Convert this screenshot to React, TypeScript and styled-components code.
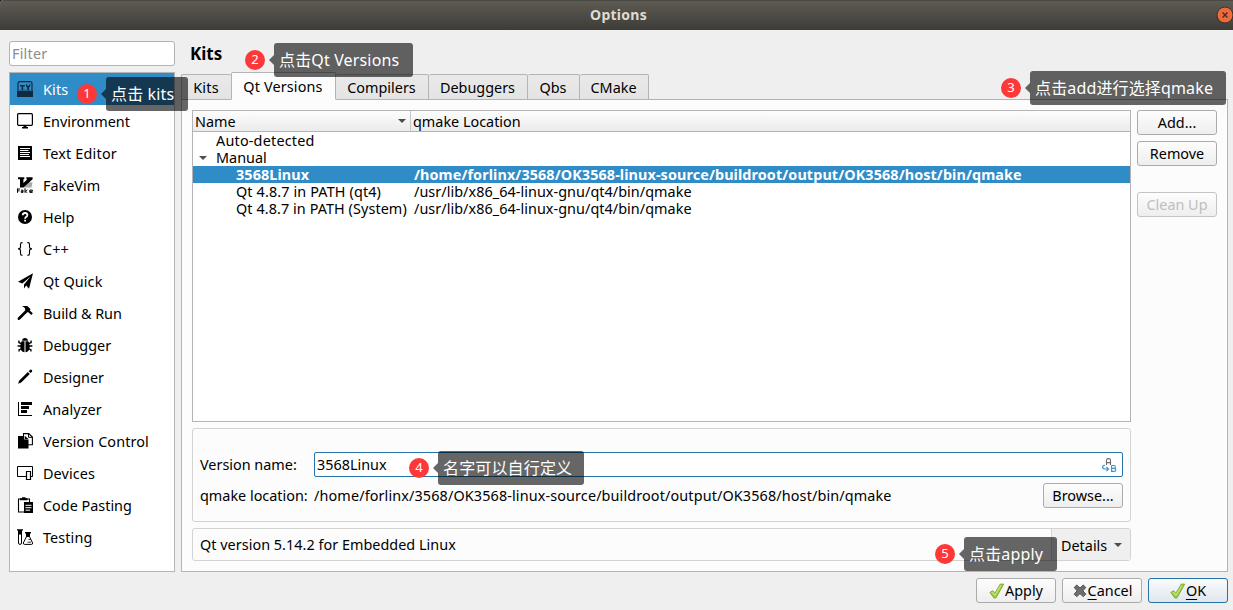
import React from "react";
import styled, { createGlobalStyle } from "styled-components";

const GlobalStyle = createGlobalStyle`
  * {
    box-sizing: border-box;
  }
  body {
    margin: 0;
    overflow: hidden;
    background: #efefef;
    font-family: "Noto Sans", "Open Sans", "Noto Sans CJK SC", sans-serif;
    font-size: 14.4px;
    line-height: 17px;
    color: #000;
  }
`;

const pages = [
  { name: "Kits", icon: "kits", spacing: 0.15 },
  { name: "Environment", icon: "monitor", spacing: 0 },
  { name: "Text Editor", icon: "text", spacing: 0.2 },
  { name: "FakeVim", icon: "vim", spacing: 0 },
  { name: "Help", icon: "help", spacing: 0 },
  { name: "C++", icon: "braces", spacing: 0.1 },
  { name: "Qt Quick", icon: "plane", spacing: 0.1 },
  { name: "Build & Run", icon: "hammer", spacing: -0.05 },
  { name: "Debugger", icon: "bug", spacing: 0 },
  { name: "Designer", icon: "pencil", spacing: 0 },
  { name: "Analyzer", icon: "chart", spacing: 0.1 },
  { name: "Version Control", icon: "pages", spacing: 0.1 },
  { name: "Devices", icon: "devices", spacing: 0.1 },
  { name: "Code Pasting", icon: "paste", spacing: 0 },
  { name: "Testing", icon: "flask", spacing: 0.1 },
];

const tabs = [
  { name: "Kits", width: 50, spacing: 0.2 },
  { name: "Qt Versions", width: 105, spacing: 0.15 },
  { name: "Compilers", width: 93, spacing: 0 },
  { name: "Debuggers", width: 99, spacing: 0 },
  { name: "Qbs", width: 52, spacing: 0 },
  { name: "CMake", width: 69, spacing: 0 },
];

const rows = [
  { name: "Auto-detected", path: "", level: 0, spacing: 0.2 },
  { name: "Manual", path: "", level: 0, spacing: 0, open: true },
  {
    name: "3568Linux",
    path: "/home/forlinx/3568/OK3568-linux-source/buildroot/output/OK3568/host/bin/qmake",
    level: 1,
    spacing: 0.09,
    selected: true,
  },
  { name: "Qt 4.8.7 in PATH (qt4)", path: "/usr/lib/x86_64-linux-gnu/qt4/bin/qmake", level: 1, spacing: 0.13 },
  { name: "Qt 4.8.7 in PATH (System)", path: "/usr/lib/x86_64-linux-gnu/qt4/bin/qmake", level: 1, spacing: 0.08 },
];

const notes = [
  { text: "点击 kits", x: 77, y: 77, width: 82 },
  { text: "点击Qt Versions", x: 245, y: 43, width: 139 },
  { text: "点击add进行选择qmake", x: 1001, y: 71, width: 196 },
  { text: "名字可以自行定义", x: 409, y: 451, width: 146 },
  { text: "点击apply", x: 935, y: 537, width: 93 },
];

const PageIcon = ({ name }: { name: string }) => {
  switch (name) {
    case "kits":
      return (
        <Icon fill="#0e2b42">
          <path d="M1 10V2.5Q1 .6 3 .6H13Q15 .6 15 2.5V10" fill="none" stroke="#0e2b42" strokeWidth="1.2" />
          <path d="M0 10H16V16H0z" />
          <path d="M3 4H7.8V5.6H6.2V9H4.6V5.6H3zM9 3.3H10.2V4.8H12V3.3H13.2V5.6L12 6.6V9H10.3V6.6L9 5.6z" />
          <path d="M2.5 9.2H13.5" stroke="#0e2b42" strokeWidth=".6" />
        </Icon>
      );
    case "monitor":
      return (
        <Icon>
          <rect x=".6" y=".7" width="14.8" height="11.6" rx="1" fill="none" stroke="#000" strokeWidth="1.2" />
          <path d="M6.5 13H9.5V14H11V15.5H5V14H6.5z" />
        </Icon>
      );
    case "text":
      return (
        <Icon>
          <path d="M1 1H15V15H1z" />
          <path d="M3 3.5H13M3 5.5H11.5M3 7.5H13M3 9.5H12M3 11.5H13" stroke="#fff" strokeWidth="1" />
        </Icon>
      );
    case "vim":
      return (
        <Icon>
          <path d="M9.5 5L15.5 5.5L14.5 10.5H6z" fill="#a8a8a8" />
          <path d="M1 .3H7.3V2.2H6.4V6L10.4 2.2H9.4V.3H15.6V2.2L6.4 10.6H3V2.2H1z" />
          <path d="M.5 11.5V15.8M.5 12H3M.5 13.8H2.6M4 13.2H6V15.4H4.2V14.3H6M8 11.3V15.8M10.3 12.8L8.4 14.2L10.3 15.8M15.6 15.4H12.8V13.1H15.4V14.3H13" fill="none" stroke="#000" />
        </Icon>
      );
    case "help":
      return (
        <Icon>
          <circle cx="8" cy="8" r="7" />
          <path d="M5.7 6.2Q5.8 4 8.1 4Q10.4 4 10.4 6Q10.4 7.2 9.1 8Q8.1 8.6 8.1 9.7" fill="none" stroke="#fff" strokeWidth="1.8" />
          <path d="M7.2 10.7H9V12.4H7.2z" fill="#fff" />
        </Icon>
      );
    case "braces":
      return (
        <Icon fill="none" stroke="#000" strokeWidth="1.1">
          <path d="M5.5 1.6H5Q3.5 1.6 3.5 3.2V6Q3.5 7.9 1 7.9Q3.5 7.9 3.5 9.8V12.6Q3.5 14.3 5 14.3H5.5M10.3 1.6H11Q12.5 1.6 12.5 3.2V6Q12.5 7.9 15 7.9Q12.5 7.9 12.5 9.8V12.6Q12.5 14.3 11 14.3H10.3" />
        </Icon>
      );
    case "plane":
      return (
        <Icon>
          <path d="M16 .2L1 8.7L5.3 10.6L13.6 3.4L7 11.4V15.6L9.2 12.6L12 15.8z" />
        </Icon>
      );
    case "hammer":
      return (
        <Icon>
          <path d="M5.5 1H10.3L13.5 4L12.8 5.4L15.8 8.2L14.2 10L11 6.9L9.8 7.8L3 14.6Q1.8 15.5 .9 14.7Q.1 13.6 1.1 12.6L8.1 5.6V3.6Q7.3 2 5.5 1.6z" />
        </Icon>
      );
    case "bug":
      return (
        <Icon>
          <path d="M5 3.7Q5.4 1 8 1Q10.6 1 11 3.7z" />
          <path d="M7.5 4.3V15.3Q3.3 14.5 3.3 9.5Q3.3 6 4.7 4.3zM8.5 4.3V15.3Q12.7 14.5 12.7 9.5Q12.7 6 11.3 4.3z" />
          <path d="M4 6.5L1.9 5.6V3.5M12 6.5L14.1 5.6V3.5M4 9H.6M12 9H15.4M4.5 11.8L2.1 12.7V14.6M11.5 11.8L13.9 12.7V14.6" fill="none" stroke="#000" strokeWidth="1.4" />
        </Icon>
      );
    case "pencil":
      return (
        <Icon>
          <path d="M11.7 2.2L13.2 .8Q14 .2 14.8 1Q15.6 1.9 15 2.7L13.6 4.1zM10.9 3L12.8 4.9L4.2 13.4L1 14.8L2.3 11.6z" />
        </Icon>
      );
    case "chart":
      return (
        <Icon>
          <path d="M1 1H2V14H15V15H1zM4 1H15V4H4zM4 5H12V8H4zM4 9H10V12H4z" />
        </Icon>
      );
    case "pages":
      return (
        <Icon>
          <path d="M6.5 .6H11.8L15.4 4V11.8H6.5z" fill="#fff" stroke="#000" strokeWidth="1.1" />
          <path d="M11.5 .8V4.3H15.2" fill="none" stroke="#000" />
          <path d="M1 3H7.3V6.5H11.5V15.6H1z" />
          <path d="M8 3L11.7 6.2H8z" />
        </Icon>
      );
    case "devices":
      return (
        <Icon fill="#fff" stroke="#000">
          <path d="M.5 1.5H15.5V11.5H.5z" />
          <path d="M9.5 6.5H13.5V14.5H9.5z" strokeWidth="1.2" />
          <path d="M15.5 11.5H13.5" />
        </Icon>
      );
    case "paste":
      return (
        <Icon>
          <path d="M1.5 2H12.5V15H1.5z" fill="#fff" stroke="#000" strokeWidth="1.1" />
          <path d="M3 1.3H5V.3H8.5V1.3H10.5V3.3H3z" />
          <path d="M7 5H16V16H7z" />
          <path d="M8.5 8.3H14.5M8.5 10.7H14.5M8.5 13.2H13" stroke="#fff" />
        </Icon>
      );
    default:
      return (
        <Icon>
          <path d="M0 .2H6V1.6H5V5.5H1V1.6H0z" />
          <path d="M1.5 5V14Q1.5 15.4 3 15.4Q4.5 15.4 4.5 14V5" fill="none" stroke="#000" />
          <path d="M8 3H14V4.4H13V8H9V4.4H8z" />
          <path d="M9.3 8L6.3 14Q6.2 15.4 7.5 15.4H14.5Q15.8 15.4 15.6 14L12.7 8" fill="none" stroke="#000" />
          <path d="M11.5 10.5H13.5M10.5 13.2H14" stroke="#000" strokeWidth=".8" />
        </Icon>
      );
  }
};

const CheckMark = () => (
  <ButtonIcon>
    <path d="M.9 9.4L3.8 7.8L5.8 10.3L11.4 1L14.6 1.2L7 14.8L5 15z" fill="#a6d13e" stroke="#74a02f" strokeWidth=".9" />
    <path d="M2.6 9.6L3.7 9.1L5.9 12L12 2.2" fill="none" stroke="#d8ec9a" strokeWidth=".9" />
  </ButtonIcon>
);

const CrossMark = () => (
  <ButtonIcon>
    <path
      d="M2.2 4.4L4.8 2L8 5L11.2 2L13.8 4.4L10.9 7.8L13.8 11.2L11.2 13.6L8 10.6L4.8 13.6L2.2 11.2L5.1 7.8z"
      fill="#6e6e6e"
      stroke="#505050"
    />
  </ButtonIcon>
);

export default function App() {
  return (
    <Window>
      <GlobalStyle />
      <TitleBar>
        <Title>Options</Title>
        <CloseButton viewBox="0 0 18 18">
          <circle cx="9" cy="9" r="8" fill="#ee6a3c" stroke="#37332c" />
          <path d="M6.6 6.6L11.4 11.4M11.4 6.6L6.6 11.4" stroke="#4a3024" strokeWidth="1.4" />
        </CloseButton>
      </TitleBar>
      <Content>
        <Sidebar>
          <Filter placeholder="Filter" />
          <PageList>
            {pages.map((page, i) => (
              <PageItem key={page.name} $selected={i === 0} $spacing={page.spacing}>
                <PageIcon name={page.icon} />
                {page.name}
              </PageItem>
            ))}
          </PageList>
        </Sidebar>
        <Main>
          <Heading>Kits</Heading>
          <TabBar>
            {tabs.map((tab, i) => (
              <Tab key={tab.name} $selected={i === 1} $width={tab.width} $spacing={tab.spacing}>
                {tab.name}
              </Tab>
            ))}
          </TabBar>
          <Pane>
            <PaneLeft>
              <Tree>
                <TreeHeader>
                  <NameHeader>
                    Name
                    <Arrow />
                  </NameHeader>
                  <PathHeader>qmake Location</PathHeader>
                </TreeHeader>
                {rows.map((row) => (
                  <TreeRow key={row.name} $selected={row.selected}>
                    <Expander>{row.open && <Arrow />}</Expander>
                    <NameCell $level={row.level} $spacing={row.spacing}>
                      {row.name}
                    </NameCell>
                    <PathCell $selected={row.selected}>{row.path}</PathCell>
                  </TreeRow>
                ))}
              </Tree>
              <Details>
                <FormRow>
                  <Label>Version name:</Label>
                  <NameField>
                    3568Linux
                    <VariableIcon viewBox="0 0 16 16">
                      <path d="M5.5 8V3.5Q5.5 1.6 7.2 1.6H7.8Q9.5 1.6 9.5 3.5V8M5.5 5.6H9.5" stroke="#6b6b6b" strokeWidth="1.1" />
                      <path d="M4 8.3Q1.6 8.6 1.6 10.3Q1.6 12 4 12H7M5.4 9.8L7.6 12L5.4 14.2M10.6 8.5V14.4H13Q14.8 14.4 14.8 12.9Q14.8 11.4 13 11.4H10.6M13 11.4Q14.4 11.4 14.4 9.9Q14.4 8.5 13 8.5H10.6" stroke="#2f95d8" strokeWidth="1.1" />
                    </VariableIcon>
                  </NameField>
                </FormRow>
                <FormRow>
                  <Label>qmake location:</Label>
                  <PathValue>/home/forlinx/3568/OK3568-linux-source/buildroot/output/OK3568/host/bin/qmake</PathValue>
                  <Button>Browse...</Button>
                </FormRow>
              </Details>
              <Summary>
                <SummaryText>Qt version 5.14.2 for Embedded Linux</SummaryText>
                <DetailsButton>
                  Details
                  <Arrow />
                </DetailsButton>
              </Summary>
            </PaneLeft>
            <SideButtons>
              <Button>Add...</Button>
              <Button>Remove</Button>
              <CleanUpButton disabled>Clean Up</CleanUpButton>
            </SideButtons>
          </Pane>
        </Main>
      </Content>
      <Footer>
        <Button>
          <CheckMark />
          Apply
        </Button>
        <Button>
          <CrossMark />
          <span>
            <u>C</u>ancel
          </span>
        </Button>
        <Button $primary>
          <CheckMark />
          <span>
            <u>O</u>K
          </span>
        </Button>
      </Footer>
      {notes.map((note, i) => (
        <Note key={note.text} $x={note.x} $y={note.y}>
          <Badge>{i + 1}</Badge>
          <NoteArrow />
          <NoteText $width={note.width}>{note.text}</NoteText>
        </Note>
      ))}
    </Window>
  );
}

const Window = styled.div`
  position: relative;
  display: flex;
  flex-direction: column;
  width: 1233px;
  height: 610px;
  overflow: hidden;
  background: #efefef;
`;

const TitleBar = styled.div`
  display: flex;
  align-items: center;
  justify-content: center;
  height: 30px;
  flex-shrink: 0;
  border-top: 1px solid #4a4843;
  border-top-left-radius: 4px;
  background: linear-gradient(#5e5b53, #3d3c37);
  box-shadow: -4px -4px 0 #1c1b1a;
`;

const Title = styled.div`
  flex: 1;
  padding: 0 0 2px 21px;
  text-align: center;
  font-size: 14px;
  font-weight: 700;
  letter-spacing: 0.25px;
  color: #dfdbd2;
`;

const CloseButton = styled.svg`
  width: 18px;
  height: 18px;
  margin: 0 -1px 1px 0;
`;

const Content = styled.div`
  display: flex;
  gap: 6px;
  height: 542px;
  padding: 11px 5px 0 9px;
`;

const Sidebar = styled.div`
  display: flex;
  flex-direction: column;
  gap: 6px;
  width: 166px;
`;

const Filter = styled.input`
  height: 25px;
  padding: 0 2px;
  border: 1px solid #b3b3b3;
  border-radius: 3px;
  outline: none;
  background: #fff;
  font: inherit;
  letter-spacing: 0.2px;
  &::placeholder {
    color: #8c8c8c;
  }
`;

const PageList = styled.div`
  flex: 1;
  border: 1px solid #b4b4b4;
  background: #fff;
`;

const PageItem = styled.div<{ $selected: boolean; $spacing: number }>`
  display: flex;
  align-items: center;
  gap: 10px;
  height: 32px;
  padding-left: 7px;
  letter-spacing: ${(props) => props.$spacing}px;
  color: ${(props) => (props.$selected ? "#fff" : "#000")};
  background: ${(props) => (props.$selected ? "#308cc6" : "transparent")};
`;

const Icon = styled.svg.attrs({ viewBox: "0 0 16 16" })`
  width: 16px;
  height: 16px;
  flex-shrink: 0;
`;

const Main = styled.div`
  display: flex;
  flex: 1;
  flex-direction: column;
`;

const Heading = styled.div`
  height: 31px;
  padding-left: 9px;
  font-size: 17px;
  font-weight: 700;
  line-height: 26px;
`;

const TabBar = styled.div`
  display: flex;
  align-items: flex-end;
  height: 28px;
  z-index: 1;
`;

const Tab = styled.div<{ $selected: boolean; $width: number; $spacing: number }>`
  width: ${(props) => props.$width}px;
  height: ${(props) => (props.$selected ? 28 : 26)}px;
  padding: ${(props) => (props.$selected ? 5 : 4)}px 1px 0 0;
  border: 1px solid #b4b4b4;
  border-left-width: ${(props) => (props.$selected ? 1 : 0)}px;
  border-bottom-color: ${(props) => (props.$selected ? "#fcfcfc" : "#b4b4b4")};
  border-radius: 2px 2px 0 0;
  background: ${(props) => (props.$selected ? "#fcfcfc" : "linear-gradient(#e9e9e9, #e4e4e4)")};
  text-align: center;
  letter-spacing: ${(props) => props.$spacing}px;
  &:first-child {
    border-left-width: 1px;
    border-right: 0;
  }
`;

const Pane = styled.div`
  display: flex;
  flex: 1;
  gap: 6px;
  margin-top: -1px;
  padding: 10px;
  border: 1px solid #b4b4b4;
  background: #fcfcfc;
`;

const PaneLeft = styled.div`
  width: 939px;
`;

const Tree = styled.div`
  height: 312px;
  border: 1px solid #b4b4b4;
  background: #fff;
`;

const TreeHeader = styled.div`
  display: flex;
  height: 21px;
  border-bottom: 1px solid #b4b4b4;
  background: linear-gradient(#fdfdfd, #ebebeb);
  line-height: 21px;
`;

const NameHeader = styled.div`
  display: flex;
  align-items: center;
  justify-content: space-between;
  width: 218px;
  padding: 0 4px 0 2px;
  border-right: 1px solid #c6c6c6;
`;

const PathHeader = styled.div`
  padding-left: 2px;
`;

const Arrow = styled.span`
  border: 4px solid transparent;
  border-top-color: #4d4d4d;
  border-bottom: 0;
`;

const TreeRow = styled.div<{ $selected?: boolean }>`
  display: flex;
  height: 17px;
  white-space: pre;
  font-weight: ${(props) => (props.$selected ? 700 : 400)};
  color: ${(props) => (props.$selected ? "#fff" : "#000")};
  background: ${(props) => (props.$selected ? "#308cc6" : "transparent")};
`;

const Expander = styled.div`
  display: flex;
  align-items: center;
  justify-content: center;
  width: 20px;
`;

const NameCell = styled.div<{ $level: number; $spacing: number }>`
  width: 201px;
  padding-left: ${(props) => 3 + props.$level * 20}px;
  letter-spacing: ${(props) => props.$spacing}px;
`;

const PathCell = styled.div<{ $selected?: boolean }>`
  letter-spacing: ${(props) => (props.$selected ? 0.09 : 0.05)}px;
`;

const Details = styled.div`
  display: flex;
  flex-direction: column;
  gap: 6px;
  height: 94px;
  margin-top: 6px;
  padding: 23px 7px 0;
  border: 1px solid #d3d3d3;
  border-radius: 3px;
`;

const FormRow = styled.div`
  display: flex;
  align-items: center;
  height: 25px;
`;

const Label = styled.div`
  width: 114px;
`;

const NameField = styled.div`
  display: flex;
  align-items: center;
  justify-content: space-between;
  flex: 1;
  height: 25px;
  padding: 0 5px 0 2px;
  border: 1px solid #2573a7;
  border-radius: 2px;
  background: #fff;
`;

const VariableIcon = styled.svg`
  width: 16px;
  height: 16px;
  fill: none;
`;

const PathValue = styled.div`
  flex: 1;
  letter-spacing: 0.125px;
`;

const Summary = styled.div`
  display: flex;
  align-items: center;
  justify-content: space-between;
  height: 33px;
  margin-top: 6px;
  padding-left: 7px;
  border: 1px solid #d3d3d3;
  border-radius: 3px;
`;

const SummaryText = styled.div`
  letter-spacing: 0.03px;
`;

const DetailsButton = styled.div`
  display: flex;
  align-items: center;
  justify-content: space-between;
  width: 79px;
  height: 31px;
  padding: 1px 8px 0 9px;
  border-left: 1px solid #d3d3d3;
  background: #efefef;
`;

const SideButtons = styled.div`
  display: flex;
  flex-direction: column;
  gap: 6px;
`;

const Button = styled.button<{ $primary?: boolean }>`
  display: flex;
  align-items: center;
  justify-content: center;
  width: 80px;
  height: 25px;
  padding: 0;
  border: 1px solid ${(props) => (props.$primary ? "#2573a7" : "#ababab")};
  border-radius: 3px;
  background: ${(props) => (props.$primary ? "linear-gradient(#fafcfd, #dfe6ec)" : "linear-gradient(#fdfdfd, #eeeeee)")};
  font: inherit;
  color: #000;
  u {
    text-underline-offset: 3px;
  }
`;

const CleanUpButton = styled(Button)`
  margin-top: 20px;
  border-color: #c4c4c4;
  color: #bebebe;
`;

const ButtonIcon = styled.svg.attrs({ viewBox: "0 0 16 16" })`
  width: 16px;
  height: 16px;
`;

const Footer = styled.div`
  display: flex;
  justify-content: flex-end;
  gap: 6px;
  padding: 6px 5px 0;
`;

const Note = styled.div<{ $x: number; $y: number }>`
  position: absolute;
  left: ${(props) => props.$x}px;
  top: ${(props) => props.$y}px;
  z-index: 2;
  display: flex;
  align-items: center;
`;

const Badge = styled.div`
  width: 20px;
  height: 20px;
  border-radius: 50%;
  background: #fc3838;
  color: #fff;
  font-size: 13px;
  line-height: 19px;
  text-align: center;
`;

const NoteArrow = styled.div`
  margin-left: 4px;
  border: 5px solid transparent;
  border-left: 0;
  border-right-color: rgba(0, 0, 0, 0.6);
`;

const NoteText = styled.div<{ $width: number }>`
  width: ${(props) => props.$width}px;
  height: 34px;
  padding-left: 5px;
  border-radius: 3px;
  background: rgba(0, 0, 0, 0.6);
  color: #fff;
  font-size: 16px;
  line-height: 34px;
  letter-spacing: 0.15px;
  white-space: nowrap;
`;
